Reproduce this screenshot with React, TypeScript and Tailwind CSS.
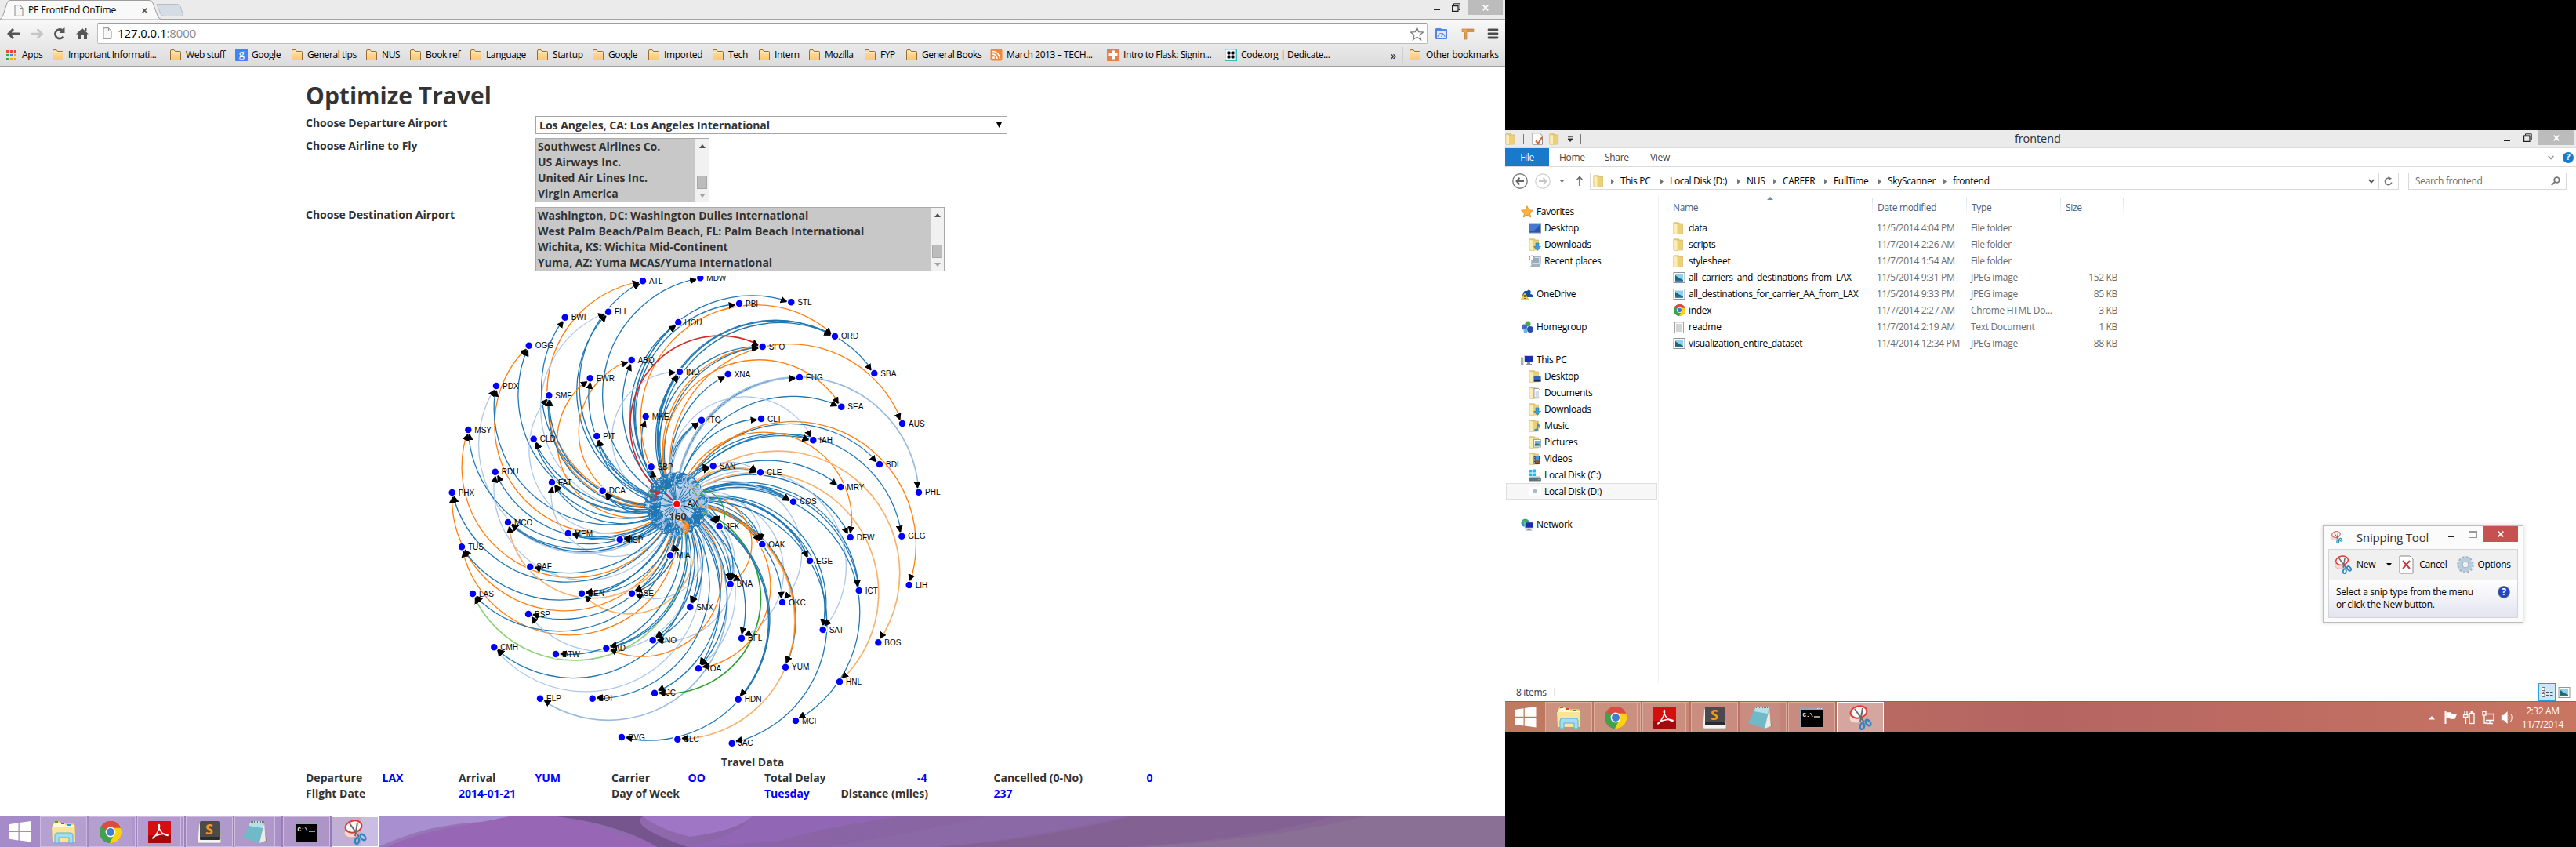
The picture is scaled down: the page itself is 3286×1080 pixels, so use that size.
import type { ReactNode } from 'react';

const UI = 'font-["Open_Sans",sans-serif]';

/* ---------- flight graph data ---------- */

type Pt = [number, number];
const HUB: Pt = [863.3, 642.7];

const AIRPORTS: Record<string, Pt> = {
  ATL: [820, 358.3], FLL: [776, 397.7], BWI: [720.7, 404.7], OGG: [674.7, 440.7], ABQ: [805.7, 459],
  HOU: [865.3, 411], IND: [867, 474], EWR: [752.7, 482.3], PDX: [633, 492], SMF: [700.3, 504.3],
  MKE: [823.7, 531], MSY: [597.3, 548], CLD: [680.7, 559.7], PIT: [761.3, 556], SBP: [830.7, 595.3],
  RDU: [631.7, 601.7], FAT: [704, 615], DCA: [768.7, 625.7], PHX: [576.7, 628], MDW: [893.3, 354.3],
  PBI: [943, 387], STL: [1009.3, 385.3], ORD: [1065, 428.7], SFO: [972.7, 442], XNA: [928.7, 477],
  EUG: [1020, 481], SBA: [1115.3, 476], SEA: [1073.3, 518.7], CLT: [971, 534], ITO: [895, 535.7],
  AUS: [1151, 540], IAH: [1037.3, 561.3], BDL: [1122, 592], SAN: [909.7, 594.3], CLE: [970, 602.3],
  MRY: [1072.3, 621], COS: [1012, 639.7], PHL: [1172, 627.7], MCO: [648, 666], MEM: [724.7, 680],
  MSP: [790.7, 688], TUS: [589, 697.3], MIA: [855, 708.3], SAF: [676.3, 722.7], LAS: [603, 757],
  DEN: [742, 756.7], ASE: [806, 756.7], SMX: [880.3, 774], PSP: [674, 783], CMH: [630.3, 825.3],
  RNO: [832.7, 816.3], IAD: [773.3, 826.7], DTW: [709, 834], ELP: [689, 890.7], BOI: [755.7, 890.7],
  SJC: [835, 883.7], CVG: [793, 940], SLC: [864.3, 942.7], JFK: [917.7, 671], OAK: [972.3, 694],
  EGE: [1033, 715], DFW: [1084.7, 685], GEG: [1150.3, 683.7], BNA: [931.7, 744.7], ICT: [1095.7, 753],
  LIH: [1159.7, 746], OKC: [998, 768], SAT: [1049.7, 803], BFL: [946, 813.7], BOS: [1120.3, 819.3],
  KOA: [891, 852.3], YUM: [1002, 850.7], HNL: [1071, 869.3], HDN: [941.7, 891.7], MCI: [1015, 919],
  JAC: [933.7, 947.7],
};

const COLORS: Record<string, string> = {
  b: '#1f77b4', l: '#aec7e8', o: '#ff7f0e', p: '#f7b26d', r: '#d62728', g: '#2ca02c', v: '#8fd07a', m: '#98bbdd',
};

// airport, then "colour + radius factor" for each carrier
const ROUTES: [string, string][] = [
  ['ATL', 'o.5 b.53'], ['FLL', 'l.5 b.56'], ['BWI', 'b.54'], ['OGG', 'o.5 b.54'], ['ABQ', 'o.5 b.77'],
  ['HOU', 'b.61 b.64'], ['IND', 'l.5 b.82 b.9'], ['EWR', 'o.5 b.72'], ['PDX', 'l.5 b.54'],
  ['SMF', 'l.5 o.61 b.6 b.64'], ['MKE', 'b.8'], ['MSY', 'o.5 b.54'], ['CLD', 'b.67 b.75'],
  ['PIT', 'b.75 b.9'], ['SBP', 'b1'], ['RDU', 'l.5 b.6'], ['FAT', 'l.5 b.65 b.75'], ['DCA', 'b.7 b.8'],
  ['PHX', 'o.5 b.522'], ['MDW', 'b.52'], ['PBI', 'b.54'], ['STL', 'b.508'], ['ORD', 'o.5 b.515 b.52'],
  ['SFO', 'r.5 o.585 b.56 b.6'], ['XNA', 'b.75'], ['EUG', 'b.7 l.71'], ['SBA', 'b.5'], ['SEA', 'o.5 b.61'],
  ['CLT', 'b.72'], ['ITO', 'l.8 b.75 b.7'], ['AUS', 'o.5'], ['IAH', 'l.5 b.7 b.76'], ['BDL', 'b.58'],
  ['SAN', 'b.7 b1'], ['CLE', 'l.6 b.8 p.75'], ['MRY', 'b.7'], ['COS', 'b.85 b.9 b1'], ['PHL', 'm.5'],
  ['MCO', 'p.5 l.65 b.67 b.7'], ['MEM', 'b.85 b1'], ['MSP', 'b.8 b1'], ['TUS', 'o.5 b.54'],
  ['MIA', 'b.8 b1'], ['SAF', 'b.75'], ['LAS', 'v.5 b.53'], ['DEN', 'p.5 b.67 b.8'],
  ['ASE', 'l.5 o.7 b.7 b.85'], ['SMX', 'b.8 b1'], ['PSP', 'l.5 b.62'], ['CMH', 'l.5 b.507'],
  ['RNO', 'l.5 b.6 b.7'], ['IAD', 'o.5 b.62 b.64'], ['DTW', 'b.6'], ['ELP', 'm.5'], ['BOI', 'b.54'],
  ['SJC', 'g.5 b.58'], ['CVG', 'b.5'], ['SLC', 'p.5'], ['JFK', 'b.6 b.75 b1'], ['OAK', 'l.55 b.65 b.75 b.9'],
  ['EGE', 'b.71 b.73'], ['DFW', 'o.5 b.62'], ['GEG', 'b.52'], ['BNA', 'o.5 l.6 b.65 b.8 b1'],
  ['ICT', 'b.57 b.585'], ['LIH', 'o.5'], ['OKC', 'l.5 b.7'], ['SAT', 'l.5 b.56 b.58'],
  ['BFL', 'l.5 b.77'], ['BOS', 'p.5'], ['KOA', 'o.5 l.58 b.65 b.75'], ['YUM', 'b.59 o.594'],
  ['HNL', 'p.5'], ['HDN', 'b.575 b.582'], ['MCI', 'b.5'], ['JAC', 'b.5'],
];

const links = ROUTES.flatMap(([code, spec]) =>
  spec.split(' ').map((s) => {
    const [x, y] = AIRPORTS[code];
    const r = Math.hypot(x - HUB[0], y - HUB[1]) * parseFloat(s.slice(1));
    return { color: COLORS[s[0]], thick: 'pvgmr'.includes(s[0]), d: `M${HUB[0]},${HUB[1]}A${r},${r} 0 0,1 ${x},${y}` };
  }),
);

// deterministic jitter for the dense knot of loops round the hub
const rnd = (i: number) => {
  const v = Math.sin(i * 127.1 + 11.7) * 43758.5453;
  return v - Math.floor(v);
};

function Hub() {
  const [cx, cy] = HUB;
  return (
    <g fill="none">
      <circle cx={cx} cy={cy} r="38" fill="#e4edf6" />
      {Array.from({ length: 64 }, (_, i) => {
        const a = (i / 64) * Math.PI * 2;
        return (
          <line key={i} x1={cx} y1={cy} x2={cx + Math.cos(a) * 36} y2={cy + Math.sin(a) * 36}
            stroke={rnd(i) > 0.4 ? '#aec7e8' : '#1f77b4'} strokeWidth="1.2" />
        );
      })}
      {Array.from({ length: 260 }, (_, i) => {
        const a = (i / 260) * Math.PI * 2;
        const d = 25 + rnd(i + 300) * 12;
        const deg = (i / 260) * 360;
        const k = rnd(i + 40);
        let c = '#1f77b4';
        if (deg > 290 || deg < 15) c = k > 0.25 ? '#aec7e8' : '#1f77b4';
        else if (deg > 125 && deg < 145) c = k > 0.35 ? '#aec7e8' : '#1f77b4';
        else if (deg > 66 && deg < 84) c = k > 0.45 ? '#ff7f0e' : '#aec7e8';
        else if (k > 0.88) c = '#aec7e8';
        return <circle key={i} cx={cx + Math.cos(a) * d} cy={cy + Math.sin(a) * d} r={2.8 + rnd(i + 90) * 2.4} stroke={c} strokeWidth="1.2" />;
      })}
      <path d="M829,626l11,2M830,634l12,-6M834,638l6,-12M836,624l2,10M848,629l14,12" stroke="#d62728" strokeWidth="1.3" />
      <path d="M828,630l6,3M845,622l5,3M886,618l4,4M893,629l6,3M896,655l8,-4M884,624l5,8" stroke="#5fae3c" strokeWidth="1.4" />
      <path d="M888,636l4,-5M880,621l5,3M893,644l6,3M873,664l4,4l-4,4l4,4" stroke="#ff9d42" strokeWidth="1.4" />
    </g>
  );
}

function FlightGraph() {
  return (
    <svg className="block font-normal" width="1170" height="610" viewBox="390 352 1170 610">
      <defs>
        <marker id="tip" viewBox="0 -5 10 10" refX="15" refY="-1.5" markerWidth="9" markerHeight="9" markerUnits="userSpaceOnUse" orient="auto">
          <path d="M0,-5L10,0L0,5" fill="#000" />
        </marker>
      </defs>
      <g fill="none">
        {links.map((l, i) => (
          <path key={i} d={l.d} stroke={l.color} strokeWidth={l.thick ? 1.7 : 1.3} />
        ))}
        <path d={`M${HUB[0]},${HUB[1]}A29,29 0 0,1 921,671`} stroke="#2ca02c" strokeWidth="1.2" />
      </g>
      <Hub />
      <g fill="none">
        {links.map((l, i) => (
          <path key={i} d={l.d} stroke="none" markerEnd="url(#tip)" />
        ))}
      </g>
      {Object.entries(AIRPORTS).map(([code, [x, y]]) => (
        <circle key={code} cx={x} cy={y} r="5" fill="#00f" stroke="#fff" strokeWidth="1.5" />
      ))}
      <circle cx={HUB[0]} cy={HUB[1]} r="5" fill="#f00" stroke="#fff" strokeWidth="1.5" />
      <g fill="#000" className="font-['Liberation_Sans',sans-serif] text-[10px]">
        {Object.entries(AIRPORTS).map(([code, [x, y]]) => (
          <text key={code} x={x + 8} y={y + 3.6}>{code}</text>
        ))}
        <text x={HUB[0] + 8} y={HUB[1] + 3.6}>LAX</text>
      </g>
      <text x="853.5" y="662.5" fill="#333" className="font-['Open_Sans',sans-serif] text-[13px] font-bold">160</text>
    </svg>
  );
}

/* ---------- small icons ---------- */

const BookmarkFolder = () => (
  <svg width="16" height="16" viewBox="0 0 16 16" className="shrink-0">
    <defs><linearGradient id="bf" x2="0" y2="1"><stop stopColor="#fee3ad" /><stop offset="1" stopColor="#fcc873" /></linearGradient></defs>
    <path d="M1.5 14V3Q1.500 1.500 3 1.500H6L7.500 3.500H13.500Q14.500 3.500 14.500 4.500V14Q14.500 14.500 14 14.500H2Q1.500 14.500 1.500 14Z" fill="url(#bf)" stroke="#9b6b2f" />
    <path d="M2.500 5H13.500" stroke="#fff2d2" />
  </svg>
);

const PageIcon = () => (
  <svg width="12" height="15" viewBox="0 0 12 15" className="shrink-0">
    <path d="M1 .7H7.500L11 4.500V14.300H1Z" fill="#f7f7f7" stroke="#8a8a8a" />
    <path d="M7.500 .7V4.500H11" fill="none" stroke="#8a8a8a" />
  </svg>
);

const Folder = ({ children, s = 16 }: { children?: ReactNode; s?: number }) => (
  <svg width={s} height={s} viewBox="0 0 16 16" className="shrink-0">
    <path d="M1 .8H7.500L8.500 2H12.500V15H1Z" fill="#e6cb76" stroke="#cdac52" strokeWidth=".6" />
    <path d="M1 1L6 2.500V16L1 14.800Z" fill="#fbeeb4" stroke="#d3b45f" strokeWidth=".5" />
    <path d="M6 3H12.500V14.500L6 15.500Z" fill="#ebd07c" />
    {children}
  </svg>
);

const folderKinds: Record<string, ReactNode> = {
  desktop: <><rect x="6.500" y="7.500" width="9" height="7" fill="#2f62b8" stroke="#99a" strokeWidth=".5" /><path d="M7 14.500H15.500V12.800H7Z" fill="#1b2a44" /></>,
  documents: <><path d="M7 2.500H12.500L14.500 4.500V14H7Z" fill="#fff" stroke="#8c8f94" strokeWidth=".8" /><path d="M8.500 6H13M8.500 8H13M8.500 10H13M8.500 12H13" stroke="#8aa6c6" strokeWidth=".8" /></>,
  downloads: <path d="M9 6H13V10.500H15.500L11 15.500L6.500 10.500H9Z" fill="#38a2e0" stroke="#1d76b5" strokeWidth=".6" />,
  music: <path d="M11 3Q12 6 14.500 7Q15 9.500 13.500 11.500Q13.500 8.500 12 8V13.500Q9 16 7 14Q7 11 11 11.500Z" fill="#3196d6" />,
  pictures: <><rect x="6.500" y="4.500" width="9" height="9.500" fill="#fff" stroke="#8c9aa8" strokeWidth=".8" /><rect x="7.800" y="6" width="6.500" height="6.500" fill="#6db5dd" /><path d="M7.800 12.500V10L10.500 9L14.300 11V12.500Z" fill="#357a5a" /></>,
  videos: <><rect x="6.500" y="4" width="8.500" height="11" fill="#39414c" /><rect x="8.500" y="5" width="4.500" height="4" fill="#3c9be0" /><rect x="8.500" y="10" width="4.500" height="4" fill="#8d5a3c" /><path d="M7.300 4V15M14.200 4V15" stroke="#cfd4da" strokeWidth=".8" strokeDasharray="1 1" /></>,
};

const ChromeIcon = ({ s }: { s: number }) => (
  <svg width={s} height={s} viewBox="0 0 28 28" className="shrink-0">
    <circle cx="14" cy="14" r="14" fill="#dd4b3e" />
    <path d="M14 14L1.900 7A14 14 0 0 0 13 28L20 17Z" fill="#3fa24c" />
    <path d="M14 14H20L13 28A14 14 0 0 0 27 8.500H14Z" fill="#fcd20e" />
    <path d="M1.900 7A14 14 0 0 1 27 8.500H14Z" fill="#dd4b3e" />
    <circle cx="14" cy="14" r="6.400" fill="#fff" /><circle cx="14" cy="14" r="5" fill="#3d7fd0" />
  </svg>
);

const PictureIcon = () => (
  <svg width="16" height="16" viewBox="0 0 16 16" className="shrink-0">
    <rect x="1" y="1.500" width="14" height="13" fill="#fff" stroke="#8d949b" />
    <rect x="3" y="3.500" width="10" height="9" fill="#8fd0ee" />
    <path d="M3 5L8 8.500L13 11V12.500H3Z" fill="#1f6a6c" /><path d="M3 11H13V12.500H3Z" fill="#2b6ca8" />
  </svg>
);

const NoteIcon = () => (
  <svg width="16" height="16" viewBox="0 0 16 16" className="shrink-0">
    <path d="M2.500 1.500H13.500V15.500H2.500Z" fill="#fbfbfb" stroke="#8d8d8d" strokeWidth=".8" />
    <path d="M4 5H12M4 7H12M4 9H12M4 11H12M4 13H12" stroke="#9a9a9a" strokeWidth=".8" />
    <path d="M3 1V2.500M5 1V2.500M7 1V2.500M9 1V2.500M11 1V2.500M13 1V2.500" stroke="#666" strokeWidth=".7" />
  </svg>
);

const SnipIcon = ({ s }: { s: number }) => (
  <svg width={s} height={s} viewBox="0 0 32 32" className="shrink-0">
    <ellipse cx="11" cy="17" rx="9" ry="6" fill="#f4d9d6" stroke="#e2a49e" />
    <ellipse cx="14" cy="9" rx="10.500" ry="7.500" transform="rotate(-12 14 9)" fill="#fdf7f7" stroke="#d93c34" strokeWidth="2" />
    <path d="M9 5L21 22M19 4L16 21" stroke="#666d75" strokeWidth="2" />
    <ellipse cx="18.500" cy="27" rx="2.600" ry="4" transform="rotate(12 18.500 27)" fill="none" stroke="#2b86c4" strokeWidth="2.400" />
    <ellipse cx="26" cy="22.500" rx="2.600" ry="4.300" transform="rotate(-40 26 22.500)" fill="none" stroke="#2b86c4" strokeWidth="2.400" />
  </svg>
);

const Restore = () => (
  <svg width="11" height="11" viewBox="0 0 11 11"><path d="M2.500 2.500V.8H10.200V8.500H8.500" fill="none" stroke="#222" /><path d="M.6 3H8V10.400H.6Z" fill="none" stroke="#222" strokeWidth="1.200" /><path d="M.6 3.500H8" stroke="#222" strokeWidth="1.500" /></svg>
);

const Cross = ({ c = '#fff', s = 8 }: { c?: string; s?: number }) => (
  <svg width={s} height={s} viewBox="0 0 8 8"><path d="M.7 .7L7.300 7.300M7.300 .7L.7 7.300" stroke={c} strokeWidth="1.700" /></svg>
);

/* ---------- taskbar ---------- */

const WindowsLogo = () => (
  <svg width="28" height="27" viewBox="0 0 28 27"><path d="M0 4L11.500 2.300V12.800H0ZM12.800 2.100L27.500 0V12.800H12.800ZM0 14H11.500V24.500L0 22.800ZM12.800 14H27.500V26.500L12.800 24.600Z" fill="#fff" /></svg>
);

const taskIcons: ReactNode[] = [
  <svg width="32" height="32" viewBox="0 0 32 32">
    <path d="M2 6L5 2H12V5H29L31 8V27H2Z" fill="#f0d57c" stroke="#caa64a" strokeWidth=".6" />
    <path d="M3 7L6 4H17L18 7H30V11H3Z" fill="#fff8dd" /><rect x="5" y="2" width="4" height="2" fill="#2fae3f" /><rect x="13" y="4" width="4" height="2" fill="#d2422d" /><rect x="21" y="6" width="4" height="2" fill="#3196d6" />
    <path d="M1 9H30L31 28H2Z" fill="#f8e49b" />
    <path d="M5 30V20Q5 17 8 17H25Q28 17 28 20V30H23V23H10V30Z" fill="#a5dcf2" stroke="#5bb2d8" />
  </svg>,
  <ChromeIcon s={28} />,
  <svg width="29" height="28" viewBox="0 0 29 28"><rect width="29" height="28" rx="1" fill="#d50f10" /><path d="M0 18H29V27Q29 28 28 28H1Q0 28 0 27Z" fill="#a30a0b" /><path d="M6 22C9 20 15 10 14.500 5.500C14 3 12.500 5.500 14 9C16 14 20 18 25 18.500C26 17 21 15.500 15 17C10 18 5 20.500 6 22Z" fill="none" stroke="#fff" strokeWidth="1.500" /></svg>,
  <svg width="32" height="30" viewBox="0 0 32 30"><path d="M3 4H29L31 27Q31 29 29 29H3Q1 29 1 27Z" fill="#f3f3f3" stroke="#999" strokeWidth=".6" /><rect x="4" y="1" width="25" height="22" rx="2" fill="#4b4b4b" /><rect x="4" y="21" width="25" height="4" rx="1" fill="#2b2b2b" /><text x="16" y="18" textAnchor="middle" fontSize="18" fontWeight="bold" fontFamily="Open Sans, sans-serif" fill="#f8971d">S</text></svg>,
  <svg width="32" height="30" viewBox="0 0 32 30"><path d="M27 3L31 26L24 28Z" fill="#8a7b4c" /><path d="M11 1H28L22 29L1 22Z" fill="#6fb9c8" /><path d="M11 1H28L26 10L8 7Z" fill="#b5e0e6" /><path d="M11 2H28" stroke="#777" strokeWidth="2" strokeDasharray="1 1" /><path d="M28 3L30 26L22 29Z" fill="#e7eceb" /></svg>,
  <svg width="30" height="26" viewBox="0 0 30 26"><rect width="30" height="26" fill="#9aa3ad" /><rect x="1" y="3" width="28" height="22" fill="#000" /><path d="M22 1.500H28" stroke="#e8eef4" strokeDasharray="1.500 1" /><text x="3.500" y="12" fontSize="7.500" fontFamily="Liberation Mono, monospace" fontWeight="bold" fill="#fff">C:\</text><path d="M18 12H26" stroke="#fff" strokeWidth="1.200" /></svg>,
  <SnipIcon s={32} />,
];

const stacks = [0, 1, 1, 0, 2, 0, 0];

const TaskButtons = ({ edge }: { edge: string }) => (
  <>
    <div className="flex w-[51px] items-center justify-center"><WindowsLogo /></div>
    {taskIcons.map((icon, i) => (
      <div key={i} className="flex h-[39px] w-[62px] pr-[2px]">
        <div className={`flex flex-1 items-center justify-center border ${i === 6 ? 'border-white bg-white/40' : `bg-white/20 ${edge}`}`}>{icon}</div>
        {Array.from({ length: stacks[i] }, (_, k) => (
          <div key={k} className={`w-[4px] border border-l-0 bg-white/15 ${edge}`} />
        ))}
      </div>
    ))}
  </>
);

/* ---------- browser ---------- */

const GoogleIcon = () => (
  <span className="flex h-4 w-4 shrink-0 items-center justify-center rounded-[1px] bg-[#4384f5] font-['Liberation_Serif',serif] text-[15px] leading-none text-white"><span className="-mt-[4px]">g</span></span>
);

const marks: Record<string, ReactNode> = {
  f: <BookmarkFolder />,
  g: <GoogleIcon />,
  a: (
    <svg width="13" height="13" viewBox="0 0 13 13" className="mr-[2px] shrink-0">
      {['#e8453c', '#e8453c', '#e8453c', '#34a853', '#4285f4', '#f9ab00', '#34a853', '#f9ab00', '#f9ab00'].map((c, i) => (
        <rect key={i} x={(i % 3) * 5} y={Math.floor(i / 3) * 5} width="3" height="3" fill={c} />
      ))}
    </svg>
  ),
  r: <svg width="16" height="16" viewBox="0 0 16 16" className="shrink-0"><rect width="15" height="15" x=".5" y=".5" rx="2" fill="#f0883c" /><circle cx="4.500" cy="11.500" r="1.500" fill="#fff" /><path d="M3 7A6 6 0 0 1 9 13M3 3.500A9.500 9.500 0 0 1 12.500 13" fill="none" stroke="#fff" strokeWidth="1.700" /></svg>,
  k: <svg width="16" height="16" viewBox="0 0 16 16" className="shrink-0"><rect width="16" height="16" fill="#e57f50" /><path d="M6 2.500H10V6H13.500V10H10V13.500H6V10H2.500V6H6Z" fill="#fff" /></svg>,
  c: <svg width="16" height="16" viewBox="0 0 16 16" className="shrink-0"><rect x=".7" y=".7" width="14.600" height="14.600" fill="#fff" stroke="#36b8c4" strokeWidth="1.400" /><rect x="3.500" y="3.500" width="4" height="4" rx="1" /><rect x="8.500" y="3.500" width="4" height="4" rx="1" /><rect x="3.500" y="8.500" width="4" height="4" rx="1" /><rect x="8.500" y="8.500" width="4" height="4" rx="1" /></svg>,
};

const bookmarks: [string, string, number][] = [
  ['a', 'Apps', 58], ['f', 'Important Informati...', 150], ['f', 'Web stuff', 84], ['g', 'Google', 71], ['f', 'General tips', 95],
  ['f', 'NUS', 56], ['f', 'Book ref', 77], ['f', 'Language', 85], ['f', 'Startup', 71], ['f', 'Google', 71], ['f', 'Imported', 82],
  ['f', 'Tech', 59], ['f', 'Intern', 64], ['f', 'Mozilla', 71], ['f', 'FYP', 53], ['f', 'General Books', 108],
  ['r', 'March 2013 – TECH...', 149], ['k', 'Intro to Flask: Signin...', 150], ['c', 'Code.org | Dedicate...', 212],
];

const Chrome = () => (
  <header className={`${UI} text-[12px] tracking-[-0.4px] text-black`}>
    <div className="flex h-6 items-start bg-[#ebebeb]">
      <div className="relative flex h-6 w-[234px] items-center">
        <svg className="absolute inset-0" width="234" height="25" viewBox="0 0 234 25">
          <path d="M200 5.500H226Q229 5.500 230 8L233 17Q234 20.500 230 20.500H209Q206 20.500 205 18Z" fill="#d6dce5" stroke="#b9bdc4" />
          <path d="M0 24.500Q2.500 24 4 19L9 4Q10 .5 13 .5H190Q194 .5 195 4L201 20Q202.500 24.500 206 24.500" fill="#f9f9f9" stroke="#9d9d9d" />
        </svg>
        <div className="relative flex items-center pl-[18px] pt-[2px]">
          <PageIcon />
          <span className="ml-[6px] w-[145px] whitespace-nowrap tracking-[-0.2px]">PE FrontEnd OnTime</span>
          <Cross c="#555" s={7} />
        </div>
      </div>
      <div className="flex-1" />
      <div className="mt-[11px] h-[2px] w-[8px] bg-[#222]" />
      <div className="ml-[15px] mt-[4px]"><Restore /></div>
      <div className="ml-[9px] mr-[3px] flex h-[19px] w-[45px] items-center justify-center bg-[#bcbcbc]"><Cross /></div>
    </div>
    <div className="h-[61px] border-b border-[#a0a0a0] bg-linear-to-b from-[#f9f9f9] to-[#dcdcdc]">
      <div className="flex h-[36px] items-center border-t border-[#a3a3a3] pl-[9px]">
        <svg width="107" height="16" viewBox="0 0 107 16" fill="none" className="shrink-0">
          <path d="M16 8H3M8 2L2 8L8 14" stroke="#555" strokeWidth="3" />
          <path d="M30 8H44M38.500 2L44.500 8L38.500 14" stroke="#c6c6c6" strokeWidth="2.600" />
          <path d="M72 11.500A5.800 5.800 0 1 1 70.500 3.500" stroke="#555" strokeWidth="2.700" /><path d="M73.500 0V7H66.500Z" fill="#555" />
          <path d="M88 8.500L96 1L104 8.500H102V15H98V10H94V15H90V8.500Z" fill="#555" /><path d="M99.500 1H101.500V5H99.500Z" fill="#555" />
        </svg>
        <div className="ml-[8px] flex h-[27px] w-[1697px] items-center rounded-[2px] border border-[#bcbcbc] border-t-[#9d9d9d] bg-white pl-[6px] pr-[3px]">
          <PageIcon />
          <span className="ml-[7px] text-[15px] tracking-[-0.1px]">127.0.0.1<span className="text-[#8a8a8a]">:8000</span></span>
          <span className="flex-1" />
          <svg width="19" height="18" viewBox="0 0 19 18"><path d="M9.500 1.300L11.700 6.700L17.500 7L13 10.800L14.600 16.600L9.500 13.300L4.400 16.600L6 10.800L1.500 7L7.300 6.700Z" fill="#fff" stroke="#777" strokeWidth="1.200" /></svg>
        </div>
        <svg width="84" height="16" viewBox="0 0 84 16" className="ml-[9px]">
          <path d="M1 2V14Q1 15 2 15H15Q16 15 16 14V3Q16 2 15 2H9L8 1H2Z" fill="#4f87e8" /><rect x="3" y="5" width="11" height="8.500" fill="#dfeaff" /><path d="M4 12A4.500 4.500 0 0 1 13 12M8.500 12L11 8" fill="none" stroke="#4f87e8" strokeWidth="1.200" />
          <path d="M35 2H50V5.500H41V15H38V5.500H35Z" fill="#eda75a" stroke="#bf7c35" strokeWidth=".7" /><path d="M42 2V4M44 2V4M46 2V4M48 2V4M38 8H39.500M38 10H39.500M38 12H39.500" stroke="#9b6a2e" strokeWidth=".6" />
          <path d="M69 3H80M69 8H80M69 13H80" stroke="#4c4c4c" strokeWidth="2.800" strokeLinecap="round" />
        </svg>
      </div>
      <div className="flex h-[20px] items-center whitespace-nowrap pl-[8px]">
        {bookmarks.map(([kind, label, w], i) => (
          <div key={i} className="flex shrink-0 items-center gap-[5px]" style={{ width: w }}>{marks[kind]}<span>{label}</span></div>
        ))}
        <span className="w-[15px] text-[14px]">»</span>
        <span className="mr-[7px] h-[20px] w-px bg-[#cfcfcf]" />
        <BookmarkFolder />
        <span className="ml-[6px]">Other bookmarks</span>
      </div>
    </div>
  </header>
);

const ListBox = ({ items, width }: { items: string[]; width: string }) => (
  <div className={`flex h-[82px] border border-[#a9a9a9] ${width}`}>
    <div className="flex-1 bg-[#c8c8c8] pl-[2px]">{items.map((t) => <div key={t} className="h-[20px] whitespace-nowrap">{t}</div>)}</div>
    <div className="flex w-[17px] flex-col items-center bg-[#f1f1f1]">
      <svg width="8" height="5" viewBox="0 0 8 5" className="mt-[7px]"><path d="M0 5L4 0L8 5Z" fill="#505050" /></svg>
      <div className="mt-[35px] h-[17px] w-[13px] border border-[#a8a8a8] bg-[#bcbcbc]" />
      <svg width="8" height="5" viewBox="0 0 8 5" className="mt-[6px]"><path d="M0 0L4 5L8 0Z" fill="#a3a3a3" /></svg>
    </div>
  </div>
);

const Blue = ({ children, wide }: { children: ReactNode; wide?: boolean }) => (
  <span className={`text-[#00f] ${wide ? 'col-span-2' : ''}`}>{children}</span>
);

const Browser = () => (
  <div className="flex h-[1080px] w-[1920px] flex-col bg-white">
    <Chrome />
    <main className={`${UI} ml-[390px] h-[955px] w-[1170px] text-[14px] font-bold leading-[20px] text-[#333]`}>
      <h1 className="h-[62px] pt-[17px] text-[30px] leading-[40px]">Optimize Travel</h1>
      <div className="grid h-[29px] grid-cols-[293px_1fr]">
        <label>Choose Departure Airport</label>
        <div className="mt-[1px] flex h-[23px] w-[602px] items-center justify-between border border-[#a6a6a6] pl-[4px] pr-[6px]">
          <span>Los Angeles, CA: Los Angeles International</span>
          <svg width="7" height="7" viewBox="0 0 7 7"><path d="M0 0H7L3.500 7Z" /></svg>
        </div>
      </div>
      <div className="grid h-[88px] grid-cols-[293px_1fr]">
        <label>Choose Airline to Fly</label>
        <ListBox width="w-[222px]" items={['Southwest Airlines Co.', 'US Airways Inc.', 'United Air Lines Inc.', 'Virgin America']} />
      </div>
      <div className="grid h-[88px] grid-cols-[293px_1fr]">
        <label>Choose Destination Airport</label>
        <ListBox width="w-[522px]" items={['Washington, DC: Washington Dulles International', 'West Palm Beach/Palm Beach, FL: Palm Beach International', 'Wichita, KS: Wichita Mid-Continent', 'Yuma, AZ: Yuma MCAS/Yuma International']} />
      </div>
      <FlightGraph />
      <div className="pr-[30px] text-center">Travel Data</div>
      <div className="grid grid-cols-12 whitespace-nowrap">
        <span>Departure</span><Blue>LAX</Blue>
        <span>Arrival</span><Blue>YUM</Blue>
        <span>Carrier</span><Blue>OO</Blue>
        <span className="col-span-2">Total Delay</span><Blue>-4</Blue>
        <span className="col-span-2">Cancelled (0-No)</span><Blue>0</Blue>
        <span className="col-span-2">Flight Date</span><Blue wide>2014-01-21</Blue>
        <span className="col-span-2">Day of Week</span><Blue>Tuesday</Blue>
        <span className="col-span-2">Distance (miles)</span><Blue>237</Blue>
      </div>
    </main>
    <footer className="relative flex h-[40px] overflow-hidden border-t border-[#7f6797] bg-linear-to-r from-[#a58cc8] via-[#8a64a8] to-[#86688f]">
      <svg className="absolute inset-0" width="1920" height="40" viewBox="0 0 1920 40" preserveAspectRatio="none">
        <path d="M480 40Q540 12 600 8T720 0H460V40Z" fill="#a78fd0" />
        <path d="M490 40Q540 18 600 10L650 0H730L780 20L860 40Z" fill="#9766b5" />
        <path d="M710 0H820Q800 12 880 40H840Q790 10 710 0Z" fill="#76558f" />
        <path d="M820 0H960Q940 18 880 26Q840 16 820 0Z" fill="#9f76c6" />
        <path d="M960 0H1150Q1060 12 990 32L880 40Q940 24 960 0Z" fill="#9166b4" />
        <path d="M1050 40Q1160 22 1260 0H1440Q1300 30 1190 40Z" fill="#8b68a6" />
        <path d="M1180 40Q1330 30 1440 0H1700Q1600 30 1420 40Z" fill="#836293" />
        <path d="M1440 40Q1620 30 1740 0H1920V40Z" fill="#8b7095" />
      </svg>
      <div className="relative flex"><TaskButtons edge="border-[#cdbbe0]" /></div>
    </footer>
  </div>
);

/* ---------- file explorer ---------- */

const Screen = () => <><rect x="4" y="2" width="12" height="9" fill="#cfd3d8" /><rect x="5" y="3" width="10" height="7" fill="#1a2fb0" /><path d="M8 11H12V13H14V14H6V13H8Z" fill="#8d949c" /></>;

const navIcons: Record<string, ReactNode> = {
  star: <svg width="16" height="16" viewBox="0 0 16 16"><path d="M8 .8L10.200 5.700L15.500 6.200L11.500 9.700L12.700 15L8 12.200L3.300 15L4.500 9.700L.5 6.200L5.800 5.700Z" fill="#fcb53a" stroke="#e0861b" strokeWidth=".8" /></svg>,
  monitor: <svg width="16" height="16" viewBox="0 0 16 16"><rect x=".5" y="2" width="15" height="12" fill="#2656b5" stroke="#8793a5" /><path d="M1 3H15L6 12H1Z" fill="#4779d1" /></svg>,
  recent: <svg width="16" height="16" viewBox="0 0 16 16"><rect x="4" y="2" width="11" height="10" fill="#d5dbe1" stroke="#848d96" /><path d="M6 5H13M6 7H13M6 9H13" stroke="#5a7ea8" /><path d="M2 15H15L13.500 12H4Z" fill="#a7b0b8" /><circle cx="4" cy="4" r="3" fill="#fff" stroke="#8894a2" /></svg>,
  onedrive: <svg width="16" height="16" viewBox="0 0 16 16"><path d="M4 12Q1 10 3 7Q4 3 8 4Q10 1 12.500 4Q13 7 12 8Q16 8 15.500 12Z" fill="#124fa8" /><path d="M5 6L10 15.500H0Z" fill="#fbd02b" stroke="#c99b08" strokeWidth=".5" /><path d="M5 9V12M5 13V14" stroke="#222" strokeWidth="1.200" /></svg>,
  home: <svg width="16" height="16" viewBox="0 0 16 16"><circle cx="9" cy="4" r="3.500" fill="#4aa84e" /><circle cx="4.500" cy="8" r="3.500" fill="#3f68c9" /><circle cx="12" cy="11" r="4" fill="#2b4bae" /><circle cx="6" cy="13" r="2.500" fill="#6eb5e8" /></svg>,
  pc: <svg width="16" height="16" viewBox="0 0 16 16"><Screen /><rect y="5" width="3" height="9" fill="#b6bcc2" stroke="#888" strokeWidth=".5" /></svg>,
  network: <svg width="16" height="16" viewBox="0 0 17 17"><circle cx="6" cy="6" r="5.500" fill="#2f8fd6" /><path d="M2 3Q6 0 9 2Q6 5 7 8Q3 11 2 3Z" fill="#4cb749" /><g transform="translate(1 2.500)"><Screen /></g></svg>,
  diskc: <svg width="16" height="16" viewBox="0 0 16 16"><path d="M1 1H4.500V4.500H1ZM5.500 .5H9V4.500H5.500ZM1 5.500H4.500V9H1ZM5.500 5.500H9V9H5.500Z" fill="#15bdf2" /><path d="M2 9.500H14L16 12H0Z" fill="#b3bcc0" /><rect y="12" width="16" height="3.500" rx="1" fill="#5f757c" /><path d="M12 13.700H14" stroke="#6ddc4b" /></svg>,
  diskd: <span className="flex h-3 w-4 items-center justify-center bg-white"><span className="h-[5px] w-[6px] rounded-full bg-[#a9bcc2]" /></span>,
};

const nav: [string, string, boolean][] = [
  ['star', 'Favorites', false], ['monitor', 'Desktop', true], ['downloads', 'Downloads', true], ['recent', 'Recent places', true], ['', '', false],
  ['onedrive', 'OneDrive', false], ['', '', false], ['home', 'Homegroup', false], ['', '', false],
  ['pc', 'This PC', false], ['desktop', 'Desktop', true], ['documents', 'Documents', true], ['downloads', 'Downloads', true], ['music', 'Music', true],
  ['pictures', 'Pictures', true], ['videos', 'Videos', true], ['diskc', 'Local Disk (C:)', true], ['diskd', 'Local Disk (D:)', true], ['', '', false],
  ['network', 'Network', false],
];

const files: [ReactNode, string, string, string, string][] = [
  [<Folder />, 'data', '11/5/2014 4:04 PM', 'File folder', ''],
  [<Folder />, 'scripts', '11/7/2014 2:26 AM', 'File folder', ''],
  [<Folder />, 'stylesheet', '11/7/2014 1:54 AM', 'File folder', ''],
  [<PictureIcon />, 'all_carriers_and_destinations_from_LAX', '11/5/2014 9:31 PM', 'JPEG image', '152 KB'],
  [<PictureIcon />, 'all_destinations_for_carrier_AA_from_LAX', '11/5/2014 9:33 PM', 'JPEG image', '85 KB'],
  [<ChromeIcon s={15} />, 'index', '11/7/2014 2:27 AM', 'Chrome HTML Do...', '3 KB'],
  [<NoteIcon />, 'readme', '11/7/2014 2:19 AM', 'Text Document', '1 KB'],
  [<PictureIcon />, 'visualization_entire_dataset', '11/4/2014 12:34 PM', 'JPEG image', '88 KB'],
];

const crumbs: [string, number][] = [['This PC', 63], ['Local Disk (D:)', 98], ['NUS', 46], ['CAREER', 65], ['FullTime', 69], ['SkyScanner', 83], ['frontend', 60]];

const Help = ({ s }: { s: string }) => (
  <span className={`flex items-center justify-center rounded-full font-bold text-white ${s}`}>?</span>
);

const Down = ({ c = '#777' }: { c?: string }) => (
  <svg width="8" height="6" viewBox="0 0 8 6"><path d="M.7 1L4 4.500L7.300 1" fill="none" stroke={c} strokeWidth="1.800" /></svg>
);

const Explorer = () => (
  <div className={`${UI} flex h-[728px] flex-col bg-white text-[12px] tracking-[-0.32px] text-black`}>
    <div className="flex h-[22px] items-center bg-[#ebebeb]">
      <Folder s={15} />
      <span className="ml-[8px] h-[12px] w-px bg-[#777]" />
      <svg width="15" height="16" viewBox="0 0 15 16" className="ml-[10px]"><path d="M1 .8H10L13.500 4V15.200H1Z" fill="#fff" stroke="#8a8a8a" /><path d="M5 10.500L8 14L13 6" fill="none" stroke="#e06030" strokeWidth="2" /></svg>
      <span className="ml-[7px]"><Folder s={15} /></span>
      <svg width="8" height="7" viewBox="0 0 8 7" className="ml-[8px]"><path d="M1 .7H7M1 3H7L4 6.500Z" fill="#222" stroke="#222" strokeWidth=".8" /></svg>
      <span className="ml-[9px] h-[12px] w-px bg-[#777]" />
      <span className="ml-[553px] flex-1 text-[14.500px] tracking-[-0.1px] text-[#333]">frontend</span>
      <div className="mt-[4px] h-[2px] w-[8px] bg-[#222]" />
      <div className="-mt-[3px] ml-[17px]"><Restore /></div>
      <div className="ml-[8px] mr-[3px] flex h-[19px] w-[45px] items-center justify-center self-start bg-[#bcbcbc]"><Cross /></div>
    </div>
    <div className="flex h-[25px] items-center border-y border-[#dadbdc] text-[#444]">
      <span className="flex h-[23px] w-[56px] items-center justify-center bg-[#1979ca] text-white">File</span>
      <span className="ml-[13px] w-[58px]">Home</span><span className="w-[58px]">Share</span><span>View</span>
      <span className="flex-1" />
      <Down c="#999" />
      <span className="ml-[11px] mr-[3px]"><Help s="h-[14px] w-[14px] bg-[#1979ca] text-[11px]" /></span>
    </div>
    <div className="flex h-[36px] items-center">
      <svg width="108" height="22" viewBox="0 0 108 22" fill="none" className="shrink-0">
        <circle cx="19" cy="11" r="9.200" stroke="#7d7d7d" strokeWidth="1.400" /><path d="M24 11H15M18.500 6.800L14.500 11L18.500 15.200" stroke="#666" strokeWidth="2" />
        <circle cx="48" cy="11" r="9.200" stroke="#cfcfcf" strokeWidth="1.200" /><path d="M43 11H52M48.500 6.800L52.500 11L48.500 15.200" stroke="#c6c6c6" strokeWidth="1.800" />
        <path d="M69 9H76L72.500 13Z" fill="#777" /><path d="M95 17V6M91.500 9.500L95 5.500L98.500 9.500" stroke="#6b6b6b" strokeWidth="1.700" />
      </svg>
      <div className="flex h-[22px] w-[1032px] shrink-0 items-center border border-[#d9d9d9] pl-[3px]">
        <Folder />
        <div className="flex flex-1 whitespace-nowrap pl-[7px]">
          {crumbs.map(([t, w]) => (
            <span key={t} className="flex items-center gap-[8px]" style={{ width: w }}>
              <svg width="4" height="7" viewBox="0 0 4 7" className="shrink-0"><path d="M0 0L4 3.500L0 7Z" fill="#777" /></svg>{t}
            </span>
          ))}
        </div>
        <Down c="#555" />
        <span className="ml-[5px] h-full w-px bg-[#d9d9d9]" />
        <svg width="12" height="12" viewBox="0 0 12 12" className="mx-[6px]"><path d="M9.800 7.500A4.200 4.200 0 1 1 7 2.300" fill="none" stroke="#777" strokeWidth="1.700" /><path d="M5.500 0L10 2.500L6 5.500Z" fill="#777" /></svg>
      </div>
      <div className="ml-[12px] flex h-[22px] w-[202px] items-center justify-between border border-[#d9d9d9] pl-[8px] pr-[7px] text-[#6d6d6d]">
        Search frontend
        <svg width="12" height="12" viewBox="0 0 12 12" fill="none" stroke="#777" strokeWidth="1.800"><circle cx="7.500" cy="4.500" r="3.300" /><path d="M5 7L.8 11.200" /></svg>
      </div>
    </div>
    <div className="flex h-[622px]">
      <nav className="flex w-[196px] flex-col border-r border-[#f1f1f1] pt-[10px]">
        {nav.map(([icon, label, sub], i) => (
          <div key={i} className={`mx-px flex h-[21px] items-center ${icon === 'diskd' ? 'border border-[#dedede] bg-[#f7f7f7] pl-[28px]' : sub ? 'pl-[29px]' : 'pl-[19px]'}`}>
            {icon && (folderKinds[icon] ? <Folder>{folderKinds[icon]}</Folder> : navIcons[icon])}
            <span className="ml-[4px]">{label}</span>
          </div>
        ))}
      </nav>
      <div className="flex w-[593px] flex-col">
        <div className="flex h-[31px] items-center text-[#4c607a]">
          <span className="relative flex h-full w-[272px] items-center pl-[18px]">Name
            <svg width="8" height="4" viewBox="0 0 8 4" className="absolute left-[138px] top-[2px]"><path d="M0 4L4 0L8 4Z" fill="#5d8fb5" /></svg>
          </span>
          {[['Date modified', 'w-[120px]'], ['Type', 'w-[120px]'], ['Size', 'w-[80px]'], ['', 'w-px']].map(([t, w]) => (
            <span key={t} className={`flex h-full items-center pb-1 pt-1 ${w}`}><span className="h-full w-px shrink-0 bg-linear-to-b from-[#d5e3f0] to-white" /><span className="ml-[6px] whitespace-nowrap">{t}</span></span>
          ))}
        </div>
        {files.map(([icon, name, date, type, size]) => (
          <div key={name} className="flex h-[21px] items-center whitespace-nowrap text-[#6d6d6d]">
            <span className="ml-[18px] flex w-[16px] justify-center">{icon}</span>
            <span className="ml-[4px] w-[240px] text-black">{name}</span>
            <span className="w-[120px]">{date}</span>
            <span className="w-[120px]">{type}</span>
            <span className="w-[67px] text-right">{size}</span>
          </div>
        ))}
      </div>
    </div>
    <div className="flex h-[23px] items-center text-[#1e395b]">
      <span className="ml-[14px] w-[48px]">8 items</span>
      <span className="h-[11px] w-px bg-[#e4e4e4]" />
      <span className="flex-1" />
      <span className="flex h-[23px] w-[22px] items-center justify-center border border-[#26a0da] bg-[#cbe8f6]">
        <svg width="15" height="13" viewBox="0 0 15 13"><path d="M.5 .5H4V12.500H.5ZM.5 4.500H4M.5 8.500H4" fill="#fff" stroke="#777" /><path d="M6 2.500H9.500M11 2.500H14.500M6 6.500H9.500M11 6.500H14.500M6 10.500H9.500M11 10.500H14.500" stroke="#555" /><rect x="1.500" y="5.800" width="1.500" height="1.500" fill="#d33" /></svg>
      </span>
      <span className="ml-[3px] mr-[7px]"><PictureIcon /></span>
    </div>
  </div>
);

const Tray = () => (
  <div className="flex items-center">
    <svg width="112" height="18" viewBox="0 0 112 18" fill="none" stroke="#fff" strokeWidth="1.300">
      <path d="M1 11.500L5 7L9 11.500Z" fill="#fff" stroke="none" />
      <path d="M22.500 1V17" strokeWidth="2" /><path d="M24 3H29L31 5.500H36L34 10H29L28 9H24Z" fill="#fff" />
      <path d="M47 1V5M50 1V5M45.500 5.500H51V8.500H45.500ZM48.500 9V17" /><rect x="53" y="3.500" width="6" height="13" /><path d="M54.500 2H57.500" strokeWidth="2" />
      <path d="M75 4.500H84V12.500H74M79 13V16.500M75.500 16.500H83" /><rect x="70" y="1.500" width="4" height="4.500" /><path d="M72 6V16H76" />
      <path d="M94.500 6.500H97L101 2.500V15.500L97 11.500H94.500Z" fill="#fff" /><path d="M103 6Q105 9 103 12M105.500 4Q109 9 105.500 14" strokeWidth="1" />
    </svg>
    <div className={`${UI} ml-[8px] mr-[16px] text-center text-[12px] leading-[17px] tracking-[-0.4px] text-white`}>2:32 AM<br />11/7/2014</div>
  </div>
);

const SnippingTool = () => (
  <div className={`${UI} absolute left-[1043px] top-[670px] h-[124px] w-[256px] border border-[#bdbdbd] bg-[#fbfbfb] px-[6px] text-[12px] tracking-[-0.3px] text-black shadow-[0_0_5px_rgba(0,0,0,0.2)]`}>
    <div className="flex h-[29px] items-start">
      <span className="ml-[3px] mt-[6px]"><SnipIcon s={16} /></span>
      <span className="ml-[17px] mt-[3px] w-[117px] whitespace-nowrap text-[15px] tracking-[-0.2px] text-[#333]">Snipping Tool</span>
      <span className="mt-[12px] h-[2px] w-[8px] bg-[#222]" />
      <span className="ml-[18px] mt-[6px] h-[9px] w-[11px] border border-t-2 border-[#999]" />
      <span className="ml-[7px] flex h-[20px] w-[45px] items-center justify-center bg-[#c75050]"><Cross /></span>
    </div>
    <div className="border border-[#d5d5d5]">
      <div className="flex h-[38px] items-center bg-[#f0f0f0] pl-[6px]">
        <SnipIcon s={24} />
        <span className="ml-[5px]"><u>N</u>ew</span>
        <svg width="7" height="4" viewBox="0 0 7 4" className="ml-[14px]"><path d="M0 0H7L3.500 4Z" /></svg>
        <svg width="19" height="24" viewBox="0 0 19 24" className="ml-[9px]"><path d="M1 1H14L18 5V23H1Z" fill="#fff" stroke="#8a8a8a" /><path d="M5 7L14 17M14 7L5 17" stroke="#c53a3a" strokeWidth="2" /></svg>
        <span className="ml-[7px]"><u>C</u>ancel</span>
        <svg width="22" height="24" viewBox="0 0 22 24" className="ml-[12px]"><circle cx="11" cy="12" r="9.500" fill="none" stroke="#9bb2c6" strokeWidth="2.500" strokeDasharray="3 2" /><circle cx="11" cy="12" r="6.500" fill="none" stroke="#b9cddd" strokeWidth="5" /><circle cx="11" cy="12" r="4" fill="#f0f0f0" stroke="#8fa6ba" strokeWidth=".8" /></svg>
        <span className="ml-[5px]"><u>O</u>ptions</span>
      </div>
      <div className="flex h-[48px] justify-between bg-linear-to-b from-white to-[#e4e4f1] pl-[9px] pr-[9px] pt-[8px] leading-[16px]">
        <span>Select a snip type from the menu<br />or click the New button.</span>
        <Help s="h-[16px] w-[16px] border border-[#888] bg-[#2347b5] text-[12px]" />
      </div>
    </div>
  </div>
);

export default function App() {
  return (
    <div className="flex h-[1080px] w-[3286px] overflow-hidden bg-black">
      <Browser />
      <div className="relative flex h-[1080px] w-[1366px] flex-col pt-[166px]">
        <Explorer />
        <div className="flex h-[40px] justify-between border-t border-[#a35e4c] bg-linear-to-r from-[#c07a60] via-[#b56462] to-[#c87562]">
          <div className="flex"><TaskButtons edge="border-[#dcae9f]" /></div>
          <Tray />
        </div>
        <SnippingTool />
      </div>
    </div>
  );
}
